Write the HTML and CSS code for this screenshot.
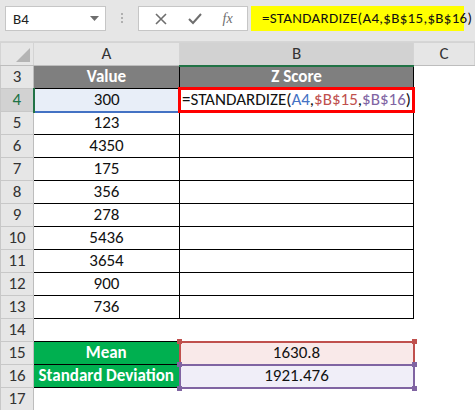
FILE: index.html
```html
<!DOCTYPE html>
<html lang="en">
<head>
    <meta charset="UTF-8">
    <title>STANDARDIZE</title>
    <link rel="stylesheet" href="styles.css">
</head>
<body>
    <div class="toolbar">
        <div class="namebox">
            <span>B4</span>
            <svg width="9" height="5" viewBox="0 0 9 5"><path d="M0 0H9L4.5 5Z" fill="#6e6e6e"/></svg>
        </div>
        <div class="grip"><i></i><i></i><i></i></div>
        <div class="fxbox">
            <svg width="12" height="12" viewBox="0 0 12 12"><path d="M1 1L11 11M11 1L1 11" stroke="#6e6e6e" stroke-width="1.6"/></svg>
            <svg width="14" height="12" viewBox="0 0 14 12"><path d="M1 6L5 10L13 1" stroke="#6e6e6e" stroke-width="2" fill="none"/></svg>
            <span class="fx">fx</span>
        </div>
        <div class="formula">=STANDARDIZE(A4,$B$15,$B$16)</div>
    </div>

    <table class="sheet">
        <colgroup>
            <col style="width:33px">
            <col style="width:146px">
            <col style="width:234px">
            <col>
        </colgroup>
        <tr class="colhead">
            <th class="corner"><svg width="14" height="14" viewBox="0 0 14 14"><path d="M14 0V14H0Z" fill="#b4b4b4"/></svg></th>
            <th>A</th>
            <th class="sel">B</th>
            <th>C</th>
        </tr>
        <tr>
            <td class="rh">3</td>
            <td class="title">Value</td>
            <td class="title">Z Score</td>
            <td class="blank"></td>
        </tr>
        <tr>
            <td class="rh rsel">4</td>
            <td class="ref-a">300</td>
            <td class="edit">=STANDARDIZE(<span class="c-blue">A4</span>,<span class="c-red">$B$15</span>,<span class="c-purple">$B$16</span>)</td>
            <td class="blank"></td>
        </tr>
        <tr><td class="rh">5</td><td>123</td><td></td><td class="blank"></td></tr>
        <tr><td class="rh">6</td><td>4350</td><td></td><td class="blank"></td></tr>
        <tr><td class="rh">7</td><td>175</td><td></td><td class="blank"></td></tr>
        <tr><td class="rh">8</td><td>356</td><td></td><td class="blank"></td></tr>
        <tr><td class="rh">9</td><td>278</td><td></td><td class="blank"></td></tr>
        <tr><td class="rh">10</td><td>5436</td><td></td><td class="blank"></td></tr>
        <tr><td class="rh">11</td><td>3654</td><td></td><td class="blank"></td></tr>
        <tr><td class="rh">12</td><td>900</td><td></td><td class="blank"></td></tr>
        <tr><td class="rh">13</td><td>736</td><td></td><td class="blank"></td></tr>
        <tr><td class="rh">14</td><td class="blank"></td><td class="blank"></td><td class="blank"></td></tr>
        <tr>
            <td class="rh">15</td>
            <td class="label">Mean</td>
            <td class="ref-red"><span class="h tl"></span><span class="h tr"></span>1630.8</td>
            <td class="blank"></td>
        </tr>
        <tr>
            <td class="rh">16</td>
            <td class="label">Standard Deviation</td>
            <td class="ref-purple"><span class="h tl"></span><span class="h tr"></span><span class="h bl"></span><span class="h br"></span>1921.476</td>
            <td class="blank"></td>
        </tr>
        <tr><td class="rh">17</td><td class="blank"></td><td class="blank"></td><td class="blank"></td></tr>
    </table>
</body>
</html>
```

FILE: styles.css
```css
body {
    margin: 0;
    width: 475px;
    height: 410px;
    overflow: hidden;
    background: #fff;
    font-family: Carlito, "Open Sans", "Liberation Sans", sans-serif;
    color: #111;
}

.toolbar {
    height: 42px;
    background: #e6e6e6;
    display: flex;
    align-items: flex-start;
    padding-top: 6px;
    box-sizing: border-box;
    padding-left: 5px;
    border-bottom: 1px solid #d6d6d6;
}
.namebox {
    flex: none;
    width: 101px;
    height: 25px;
    box-sizing: border-box;
    background: #fff;
    border: 1px solid #c6c6c6;
    display: flex;
    align-items: center;
    justify-content: space-between;
    padding: 0 6px 0 7px;
    font-size: 15px;
    color: #222;
}
.grip {
    flex: none;
    width: 32px;
    display: flex;
    flex-direction: column;
    align-items: center;
    gap: 2px;
    padding-top: 7px;
}
.grip i {
    width: 2px;
    height: 2px;
    background: #b0b0b0;
}
.fxbox {
    flex: none;
    width: 110px;
    height: 25px;
    box-sizing: border-box;
    background: #fff;
    border: 1px solid #c6c6c6;
    display: flex;
    align-items: center;
    justify-content: space-around;
    padding: 0 4px 0 6px;
}
.fx {
    font-family: "Liberation Serif", serif;
    font-style: italic;
    font-size: 14px;
    color: #6e6e6e;
}
.formula {
    flex: none;
    margin-left: 3px;
    width: 213px;
    height: 25px;
    background: #ffff00;
    font-size: 15px;
    letter-spacing: 0.3px;
    line-height: 25px;
    padding-left: 11px;
    box-sizing: border-box;
    white-space: nowrap;
    color: #111;
}

.sheet {
    border-collapse: collapse;
    table-layout: fixed;
    width: 475px;
    font-size: 17px;
}
.sheet tr {
    height: 23px;
}
.sheet td, .sheet th {
    padding: 0;
    line-height: 20px;
    text-align: center;
    border: 1px solid #000;
    white-space: nowrap;
}
.colhead th {
    background: #e6e6e6;
    font-weight: normal;
    color: #333;
    border: 1px solid #d4d4d4;
    border-bottom: 1px solid #bdbdbd;
}
.colhead th.sel {
    background: #d2d2d2;
    border-bottom: 2px solid #217346;
}
.corner {
    vertical-align: bottom;
}
.corner svg {
    display: block;
    margin: 0 3px 3px auto;
}
.sheet td.rh {
    background: #e6e6e6;
    color: #333;
    border: 1px solid #c8c8c8;
    border-right: 1px solid #bdbdbd;
}
.sheet td.rsel {
    background: #d2d2d2;
    color: #217346;
    border-right: 2px solid #217346;
}
.sheet td.blank {
    border: none;
}
.title {
    background: #7f7f7f;
    color: #fff;
    font-weight: bold;
}
.sheet td.ref-a {
    background: #e8eef8;
    border-bottom: 2px solid #4472c4;
}
.sheet td.edit {
    position: relative;
    text-align: left;
    padding-left: 2px;
}
.edit::after {
    content: "";
    position: absolute;
    left: -2px;
    right: -2px;
    top: -2px;
    bottom: -2px;
    border: 3px solid #ff0000;
}
.c-blue { color: #4472c4; }
.c-red { color: #c0504d; }
.c-purple { color: #8064a2; }

.label {
    background: #00b050;
    color: #fff;
    font-weight: bold;
}
.sheet td.ref-red,
.sheet td.ref-purple {
    position: relative;
}
.sheet td.ref-red {
    background: #f9e9e9;
    border: 2px solid #c0504d;
    border-bottom: none;
}
.sheet td.ref-purple {
    background: #f0eef8;
    border: 2px solid #8064a2;
}
.h {
    position: absolute;
    width: 5px;
    height: 5px;
}
.ref-red .h { background: #c0504d; }
.ref-purple .h { background: #8064a2; }
.h.tl { left: -4px; top: -4px; }
.h.tr { right: -4px; top: -4px; }
.h.bl { left: -4px; bottom: -4px; }
.h.br { right: -4px; bottom: -4px; }
```
